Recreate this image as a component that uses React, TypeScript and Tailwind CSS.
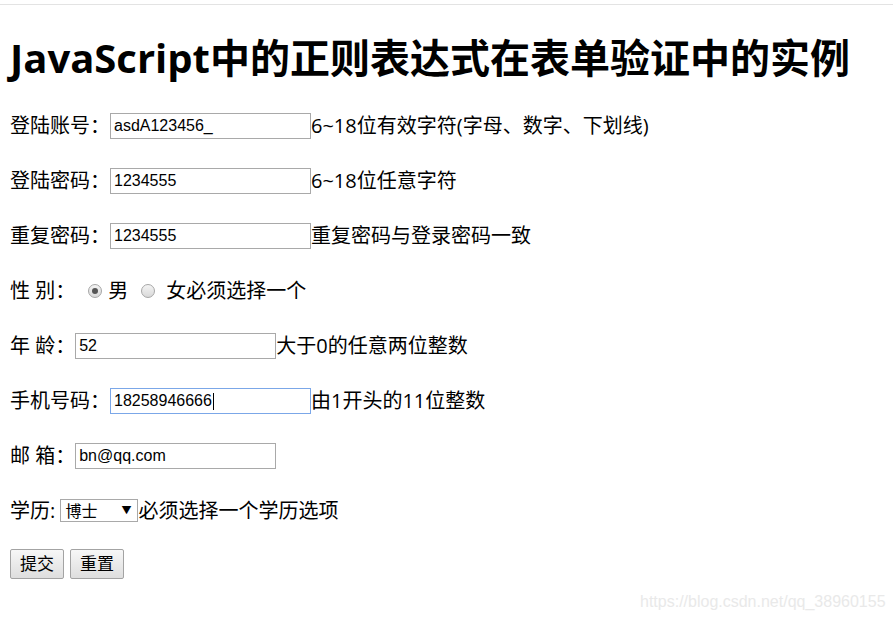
import React from 'react';

const FONT = "font-['Open_Sans','Noto_Sans_CJK_SC',sans-serif]";
const INPUT =
  "w-[201px] h-[26px] border border-[#a9a9a9] bg-white px-[3px] text-[16px] text-black font-['Liberation_Sans','Noto_Sans_CJK_SC',sans-serif] outline-none";

function Row({ children }: { children: React.ReactNode }) {
  return <div className="h-[55px] flex items-center px-[10px] whitespace-pre">{children}</div>;
}

function Radio({ checked }: { checked?: boolean }) {
  return (
    <span className="w-[14px] h-[14px] rounded-full border border-[#a6a6a6] bg-gradient-to-b from-[#f4f4f4] to-[#d9d9d9] flex items-center justify-center shrink-0">
      {checked && <span className="w-[6px] h-[6px] rounded-full bg-[#555]" />}
    </span>
  );
}

function Button({ label }: { label: string }) {
  return (
    <button className="h-[30px] w-[54px] border border-[#a3a3a3] rounded-[2px] bg-gradient-to-b from-[#f7f7f7] to-[#dedede] text-[17px] text-black flex items-center justify-center">
      {label}
    </button>
  );
}

export default function App() {
  return (
    <div className={`relative min-h-screen bg-white text-black text-[20px] ${FONT}`}>
      <div className="h-[4px]" />
      <div className="h-px bg-[#e3e3e3]" />

      <h1 className="mt-[28px] h-[50px] leading-[50px] px-[10px] text-[40px] font-bold">
        JavaScript中的正则表达式在表单验证中的实例
      </h1>

      <form className="mt-[15px]">
        <Row>
          <span>登陆账号：</span>
          <input className={INPUT} defaultValue="asdA123456_" readOnly />
          <span>6~18位有效字符(字母、数字、下划线)</span>
        </Row>
        <Row>
          <span>登陆密码：</span>
          <input className={INPUT} defaultValue="1234555" readOnly />
          <span>6~18位任意字符</span>
        </Row>
        <Row>
          <span>重复密码：</span>
          <input className={INPUT} defaultValue="1234555" readOnly />
          <span>重复密码与登录密码一致</span>
        </Row>
        <Row>
          <span>性 别：</span>
          <span className="ml-[13px]"><Radio checked /></span>
          <span className="ml-[6px]">男</span>
          <span className="ml-[13px]"><Radio /></span>
          <span className="ml-[11px]">女必须选择一个</span>
        </Row>
        <Row>
          <span>年 龄：</span>
          <input className={INPUT} defaultValue="52" readOnly />
          <span>大于0的任意两位整数</span>
        </Row>
        <Row>
          <span>手机号码：</span>
          <span className="relative flex">
            <input className={`${INPUT} !border-[#7ba7e8]`} defaultValue="18258946666" readOnly />
            <span className="absolute left-[103px] top-[5px] w-px h-[17px] bg-black" />
          </span>
          <span>由1开头的11位整数</span>
        </Row>
        <Row>
          <span>邮 箱：</span>
          <input className={INPUT} defaultValue="bn@qq.com" readOnly />
        </Row>
        <Row>
          <span>学历: </span>
          <span className="relative flex w-[78px] h-[23px] border border-[#a9a9a9] bg-white items-center pl-[4px] text-[16px]">
            博士
            <span className="absolute right-[6px] top-[3px] text-[10px]">▼</span>
          </span>
          <span>必须选择一个学历选项</span>
        </Row>
        <div className="flex gap-[6px] px-[10px] mt-[11px]">
          <Button label="提交" />
          <Button label="重置" />
        </div>
      </form>

      <div className="absolute left-[640px] top-[590px] text-[16px] text-[#e9e9e9] font-['Liberation_Sans',sans-serif]">
        https://blog.csdn.net/qq_38960155
      </div>
    </div>
  );
}
